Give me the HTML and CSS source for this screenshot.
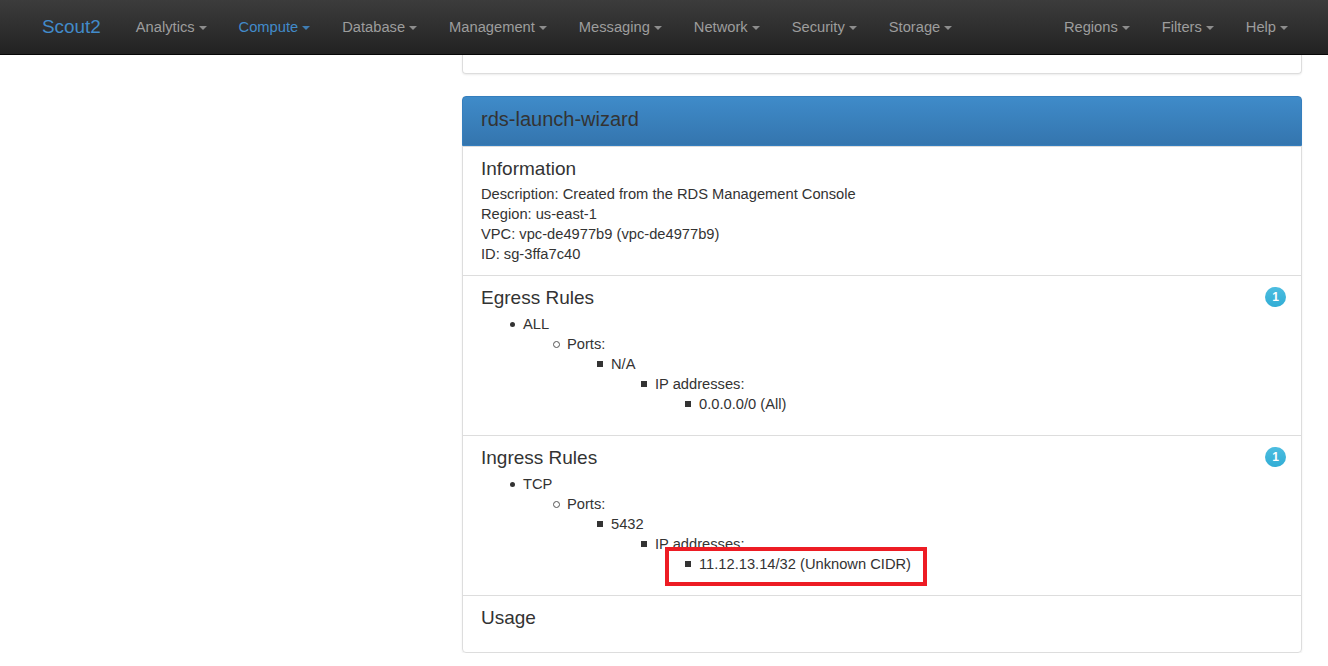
FILE: index.html
```html
<!DOCTYPE html>
<html>
<head>
<meta charset="utf-8">
<link rel="stylesheet" href="styles.css">
</head>
<body>
<nav class="navbar">
  <a class="brand">Scout2</a>
  <ul class="nav">
    <li><a>Analytics<span class="caret"></span></a></li>
    <li><a class="active">Compute<span class="caret"></span></a></li>
    <li><a>Database<span class="caret"></span></a></li>
    <li><a>Management<span class="caret"></span></a></li>
    <li><a>Messaging<span class="caret"></span></a></li>
    <li><a>Network<span class="caret"></span></a></li>
    <li><a>Security<span class="caret"></span></a></li>
    <li><a>Storage<span class="caret"></span></a></li>
  </ul>
  <ul class="nav nav-right">
    <li><a>Regions<span class="caret"></span></a></li>
    <li><a>Filters<span class="caret"></span></a></li>
    <li><a>Help<span class="caret"></span></a></li>
  </ul>
</nav>
<div class="layout">
  <div class="sidebar"></div>
  <div class="content">
    <div class="panel-stub"></div>
    <div class="panel">
      <div class="panel-heading">rds-launch-wizard</div>
      <div class="section">
        <h4 class="title">Information</h4>
        <div class="info">
          <div>Description: Created from the RDS Management Console</div>
          <div>Region: us-east-1</div>
          <div>VPC: vpc-de4977b9 (vpc-de4977b9)</div>
          <div>ID: sg-3ffa7c40</div>
        </div>
      </div>
      <div class="section">
        <span class="badge">1</span>
        <h4 class="title">Egress Rules</h4>
        <ul class="rules">
          <li class="l1">ALL
            <ul>
              <li class="l2">Ports:
                <ul>
                  <li class="l3">N/A
                    <ul>
                      <li class="l3">IP addresses:
                        <ul>
                          <li class="l3">0.0.0.0/0 (All)</li>
                        </ul>
                      </li>
                    </ul>
                  </li>
                </ul>
              </li>
            </ul>
          </li>
        </ul>
      </div>
      <div class="section">
        <span class="badge">1</span>
        <h4 class="title">Ingress Rules</h4>
        <ul class="rules">
          <li class="l1">TCP
            <ul>
              <li class="l2">Ports:
                <ul>
                  <li class="l3">5432
                    <ul>
                      <li class="l3">IP addresses:
                        <ul>
                          <li class="l3 marked">11.12.13.14/32 (Unknown CIDR)<span class="highlight"></span></li>
                        </ul>
                      </li>
                    </ul>
                  </li>
                </ul>
              </li>
            </ul>
          </li>
        </ul>
      </div>
      <div class="section section-last">
        <h4 class="title">Usage</h4>
      </div>
    </div>
  </div>
</div>
</body>
</html>
```
FILE: styles.css
```css
*, *::before, *::after { box-sizing: border-box; }
html, body { margin: 0; padding: 0; background: #fff; }
body {
  font-family: "Liberation Sans", Arial, sans-serif;
  font-size: 14.7px;
  line-height: 20px;
  color: #333;
}
.navbar {
  height: 55px;
  display: flex;
  align-items: center;
  background: linear-gradient(to bottom, #3c3c3c 0, #222 100%);
  border-bottom: 1px solid #080808;
}
.brand {
  font-size: 18.9px;
  color: #428bca;
  padding-left: 42px;
  margin-right: 20px;
}
.nav {
  list-style: none;
  margin: 0;
  padding: 0;
  display: flex;
}
.nav li a {
  display: block;
  padding: 0 15px;
  color: #9d9d9d;
  margin-right: 2px;
}
.nav li a.active { color: #428bca; }
.nav-right { margin-left: auto; margin-right: 23px; }
.caret {
  display: inline-block;
  width: 0;
  height: 0;
  margin-left: 4px;
  vertical-align: middle;
  border-top: 4px solid;
  border-left: 4px solid transparent;
  border-right: 4px solid transparent;
  opacity: 0.85;
}
.layout { display: flex; }
.sidebar { width: 447px; flex: none; }
.content { width: 840px; margin-left: 15px; flex: none; }
.panel-stub {
  height: 19px;
  border: 1px solid #ddd;
  border-top: 0;
  border-radius: 0 0 4px 4px;
  box-shadow: 0 1px 2px rgba(0,0,0,.08);
}
.panel {
  margin-top: 22px;
  border: 1px solid #ddd;
  border-radius: 4px;
  box-shadow: 0 1px 2px rgba(0,0,0,.08);
}
.panel-heading {
  background: linear-gradient(to bottom, #3f8bc9 0, #3475ae 100%);
  border: 1px solid #357ebd;
  margin: -1px -1px 0;
  border-radius: 4px 4px 0 0;
  padding: 10px 18px 14px;
  font-size: 20px;
  line-height: 24px;
  color: #333;
}
.section {
  border-top: 1px solid #ddd;
  padding: 11px 15px 10px 18px;
}
.title {
  margin: 0 0 4px;
  font-size: 19px;
  line-height: 22px;
  font-weight: 500;
}
.info { margin-bottom: 1px; }
.rules { margin: 0 0 11px; padding: 1px 0 0 42px; }
.rules ul { margin: 0; padding-left: 44px; }
.rules li { list-style: none; }
.rules li::before {
  content: "";
  display: inline-block;
  vertical-align: 2px;
  background: #333;
}
.rules .l1::before {
  width: 5px;
  height: 5px;
  border-radius: 50%;
  margin-left: -13px;
  margin-right: 8px;
}
.rules .l2::before {
  width: 7px;
  height: 7px;
  border-radius: 50%;
  background: transparent;
  border: 1px solid #555;
  margin-left: -14px;
  margin-right: 7px;
  vertical-align: 1px;
}
.rules .l3::before {
  width: 6px;
  height: 6px;
  margin-left: -14px;
  margin-right: 8px;
}
.section-last { padding-bottom: 19px; }
.badge {
  float: right;
  min-width: 10px;
  padding: 3px 7px;
  font-size: 12px;
  font-weight: bold;
  line-height: 14px;
  color: #fff;
  text-align: center;
  border-radius: 10px;
  background: linear-gradient(to bottom, #4cbde0 0, #31add5 100%);
}
.marked { position: relative; }
.highlight {
  position: absolute;
  left: -34px;
  top: -7px;
  width: 262px;
  height: 39px;
  border: 4px solid #ed1c24;
}
```
